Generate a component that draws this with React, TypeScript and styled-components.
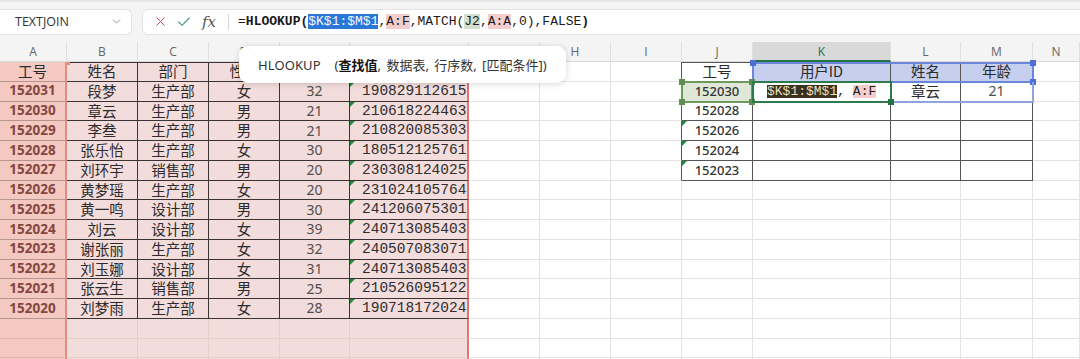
import React from 'react';
import styled, { createGlobalStyle, css } from 'styled-components';
import { X, Check, ChevronDown } from 'lucide-react';

type Kind = 'cjk' | 'id' | 'num' | 'mono' | 'rid' | 'edit';

const COLS = [67, 71, 71, 71, 70, 119, 71, 71, 71, 71, 138, 70, 72, 47];
const LETTERS = ['A', 'B', 'C', 'D', 'E', 'F', 'G', 'H', 'I', 'J', 'K', 'L', 'M', 'N'];
const ROWS = 16;

const leftRows = [
  ['工号', '姓名', '部门', '性别', '年龄', '用户ID'],
  ['152031', '段梦', '生产部', '女', '32', '190829112615'],
  ['152030', '章云', '生产部', '男', '21', '210618224463'],
  ['152029', '李叁', '生产部', '男', '21', '210820085303'],
  ['152028', '张乐怡', '生产部', '女', '30', '180512125761'],
  ['152027', '刘环宇', '销售部', '男', '20', '230308124025'],
  ['152026', '黄梦瑶', '生产部', '女', '20', '231024105764'],
  ['152025', '黄一鸣', '设计部', '男', '30', '241206075301'],
  ['152024', '刘云', '设计部', '女', '39', '240713085403'],
  ['152023', '谢张丽', '生产部', '女', '32', '240507083071'],
  ['152022', '刘玉娜', '设计部', '女', '31', '240713085403'],
  ['152021', '张云生', '销售部', '男', '25', '210526095122'],
  ['152020', '刘梦雨', '生产部', '女', '28', '190718172024'],
];

const rightRows = [
  ['工号', '用户ID', '姓名', '年龄'],
  ['152030', '', '章云', '21'],
  ['152028', '', '', ''],
  ['152026', '', '', ''],
  ['152024', '', '', ''],
  ['152023', '', '', ''],
];

const DARK = '#3b3333';
const RDARK = '#555555';
const GRID = '#e3e3e3';
const PINK = '#f3dcdc';
const SALMON = '#f4c9c1';
const PINK_GRID = '#e8cccc';

const inLeft = (r: number, c: number) => r < leftRows.length && c <= 5;
const inRight = (r: number, c: number) => r < rightRows.length && c >= 9 && c <= 12;

const cellText = (r: number, c: number) => {
  if (inLeft(r, c)) return leftRows[r][c];
  if (inRight(r, c)) return rightRows[r][c - 9];
  return '';
};

const cellKind = (r: number, c: number): Kind => {
  if (r === 1 && c === 10) return 'edit';
  if (r === 0) return 'cjk';
  if (c === 0 && inLeft(r, c)) return 'id';
  if (c === 4 && inLeft(r, c)) return 'num';
  if (c === 5 && inLeft(r, c)) return 'mono';
  if (c === 9 && inRight(r, c)) return 'rid';
  if (c === 12) return 'num';
  return 'cjk';
};

const cellBg = (r: number, c: number) => {
  if (c === 0) return SALMON;
  if (c <= 5) return PINK;
  if (r === 0 && c >= 10 && c <= 12) return '#c6cfee';
  if (r === 1 && c === 9) return '#dfe7d9';
  return '#ffffff';
};

const cellRight = (r: number, c: number): [string, number] => {
  if (c === 0) return ['#e58c7c', 2];
  if (c === 5) return ['#de7676', 2];
  if (c < 5) return [inLeft(r, c) ? DARK : PINK_GRID, 1];
  if (r < rightRows.length && c >= 8 && c <= 12) return [RDARK, 1];
  return [GRID, 1];
};

const cellBottom = (r: number, c: number) => {
  if (inLeft(r, c)) return c === 0 ? '#b9938d' : DARK;
  if (c <= 5) return c === 0 ? '#e7b3aa' : PINK_GRID;
  if (inRight(r, c)) return RDARK;
  return GRID;
};

const cellTop = (r: number, c: number) => {
  if (r !== 0) return undefined;
  if (c >= 1 && c <= 5) return DARK;
  if (c >= 9 && c <= 12) return RDARK;
  return undefined;
};

const hasFlag = (r: number, c: number) =>
  (c === 5 && r >= 1 && r < leftRows.length) || (c === 9 && r >= 3 && r < rightRows.length);

const App = () => {
  return (
    <Page>
      <GlobalStyle />
      <TopBar>
        <NameBox>
          <span>TEXTJOIN</span>
          <ChevronDown size={13} color="#8a8a8a" strokeWidth={1.6} />
        </NameBox>
        <FormulaBox>
          <X size={15} color="#d2465a" strokeWidth={1.6} />
          <Check size={16} color="#3f9c70" strokeWidth={1.6} />
          <Fx>fx</Fx>
          <Divider />
          <FormulaText>
            =<b>HLOOKUP(</b>
            <SelRef>$K$1:$M$1</SelRef>,<PinkRef>A:F</PinkRef>,MATCH(
            <GreenRef>J2</GreenRef>,<PinkRef>A:A</PinkRef>,0),FALSE<b>)</b>
          </FormulaText>
        </FormulaBox>
      </TopBar>

      <Sheet>
        {LETTERS.map((l, c) => (
          <ColHead key={l} $c={c} $active={c === 10}>
            {l}
          </ColHead>
        ))}

        {Array.from({ length: ROWS }).map((_, r) =>
          COLS.map((_w, c) => {
            const [rc, rw] = cellRight(r, c);
            const kind = cellKind(r, c);
            return (
              <Cell
                key={`${r}-${c}`}
                $r={r}
                $c={c}
                $bg={cellBg(r, c)}
                $right={rc}
                $rightW={rw}
                $bottom={cellBottom(r, c)}
                $top={cellTop(r, c)}
                $kind={kind}
                $flag={hasFlag(r, c)}
              >
                {kind === 'edit' ? (
                  <>
                    <DarkChip>$K$1:$M$1</DarkChip>,&nbsp;<PinkRef>A:F</PinkRef>
                  </>
                ) : (
                  cellText(r, c)
                )}
              </Cell>
            );
          })
        )}

        <BlueRange>
          <Handle $color="#4b6fd4" $pos="tl" />
          <Handle $color="#4b6fd4" $pos="tr" />
          <Handle $color="#4b6fd4" $pos="br" />
        </BlueRange>
        <BlueTail />
        <GreenRange>
          <Handle $color="#5f8d52" $pos="tl" />
          <Handle $color="#5f8d52" $pos="tr" />
          <Handle $color="#5f8d52" $pos="bl" />
          <Handle $color="#5f8d52" $pos="br" />
        </GreenRange>
        <ActiveCell>
          <Handle $color="#217346" $pos="br" />
        </ActiveCell>
        <ColAMark />
      </Sheet>

      <Tooltip>
        <TipName>HLOOKUP</TipName>
        <TipArgs>
          (<strong>查找值</strong>, 数据表, 行序数, [匹配条件])
        </TipArgs>
      </Tooltip>
    </Page>
  );
};

export default App;

const GlobalStyle = createGlobalStyle`
  html, body {
    margin: 0;
    padding: 0;
    background: #ffffff;
    overflow: hidden;
  }
  body {
    font-family: 'Noto Sans', 'Noto Sans CJK SC', sans-serif;
  }
`;

const Page = styled.div`
  position: relative;
  width: 1080px;
  height: 359px;
  overflow: hidden;
  background: #ffffff;
`;

const TopBar = styled.div`
  display: flex;
  align-items: center;
  gap: 10px;
  height: 42px;
  box-sizing: border-box;
  padding-bottom: 1px;
  background: #f4f4f4;
  border-top: 2px solid #e6e6e6;
`;

const NameBox = styled.div`
  display: flex;
  align-items: center;
  justify-content: space-between;
  width: 132px;
  height: 26px;
  box-sizing: border-box;
  padding: 0 8px 0 15px;
  background: #ffffff;
  border: 1px solid #e2e2e2;
  border-left: none;
  border-radius: 0 6px 6px 0;
  font-family: 'Open Sans', 'Noto Sans', sans-serif;
  font-size: 12.5px;
  font-weight: 500;
  color: #333333;
`;

const FormulaBox = styled.div`
  display: flex;
  align-items: center;
  gap: 8px;
  flex: 1;
  height: 26px;
  margin-right: -12px;
  box-sizing: border-box;
  padding-left: 10px;
  background: #ffffff;
  border: 1px solid #e2e2e2;
  border-radius: 6px;
`;

const Fx = styled.span`
  font-family: 'DejaVu Serif', 'Liberation Serif', serif;
  font-style: italic;
  font-size: 15px;
  color: #555555;
  margin-left: 2px;
`;

const Divider = styled.span`
  width: 1px;
  height: 16px;
  background: #d4d4d4;
  margin: 0 1px 0 4px;
`;

const FormulaText = styled.div`
  font-family: 'Liberation Mono', 'DejaVu Sans Mono', monospace;
  font-size: 13px;
  color: #1a1a1a;
  white-space: pre;
  b {
    font-weight: 700;
  }
`;

const SelRef = styled.span`
  background: #2a78d6;
  color: #f3f6ff;
`;

const PinkRef = styled.span`
  background: #f6cdcd;
`;

const GreenRef = styled.span`
  background: #d4dfcd;
`;

const DarkChip = styled.span`
  background: #3a3120;
  color: #eadfba;
`;

const Sheet = styled.div`
  position: relative;
  display: grid;
  grid-template-columns: ${COLS.map((w) => `${w}px`).join(' ')};
  grid-template-rows: 20px repeat(${ROWS}, 19.75px);
`;

const ColHead = styled.div<{ $c: number; $active: boolean }>`
  grid-row: 1;
  grid-column: ${(p) => p.$c + 1};
  display: flex;
  align-items: center;
  justify-content: center;
  box-sizing: border-box;
  background: ${(p) => (p.$active ? '#d9d9d9' : '#f4f4f4')};
  border-right: 1px solid #e0e0e0;
  border-bottom: ${(p) => (p.$active ? '2px solid #217346' : '1px solid #dadada')};
  font-family: 'Open Sans', 'Noto Sans', sans-serif;
  font-size: 12px;
  color: ${(p) => (p.$active ? '#217346' : '#666666')};
`;

const kindStyles: Record<Kind, ReturnType<typeof css>> = {
  cjk: css`
    font-size: 14.5px;
    color: #2b2b2b;
  `,
  id: css`
    font-family: 'Noto Sans', 'Noto Sans CJK SC', sans-serif;
    font-size: 13.5px;
    font-weight: 700;
    color: #84463f;
  `,
  num: css`
    font-family: 'Noto Sans', sans-serif;
    font-size: 14px;
    color: #4f4f4f;
  `,
  mono: css`
    justify-content: flex-start;
    padding-left: 12px;
    font-family: 'Liberation Mono', 'DejaVu Sans Mono', monospace;
    font-size: 14.5px;
    color: #2e2e2e;
  `,
  rid: css`
    font-family: 'Noto Sans', sans-serif;
    font-size: 13px;
    font-weight: 500;
    color: #333333;
  `,
  edit: css`
    justify-content: flex-start;
    padding-left: 14px;
    font-family: 'Liberation Mono', 'DejaVu Sans Mono', monospace;
    font-size: 13px;
    color: #222222;
  `,
};

const Cell = styled.div<{
  $r: number;
  $c: number;
  $bg: string;
  $right: string;
  $rightW: number;
  $bottom: string;
  $top?: string;
  $kind: Kind;
  $flag?: boolean;
}>`
  position: relative;
  grid-row: ${(p) => p.$r + 2};
  grid-column: ${(p) => p.$c + 1};
  display: flex;
  align-items: center;
  justify-content: center;
  box-sizing: border-box;
  white-space: nowrap;
  line-height: 1;
  font-family: 'Noto Sans CJK SC', 'Noto Sans', sans-serif;
  background: ${(p) => p.$bg};
  border-right: ${(p) => p.$rightW}px solid ${(p) => p.$right};
  border-bottom: 1px solid ${(p) => p.$bottom};
  box-shadow: ${(p) => (p.$top ? `inset 0 1px 0 ${p.$top}` : 'none')};
  ${(p) => kindStyles[p.$kind]}
  ${(p) =>
    p.$flag &&
    css`
      &::before {
        content: '';
        position: absolute;
        left: 0;
        top: 0;
        border-top: 5px solid #1f8a3b;
        border-right: 5px solid transparent;
      }
    `}
`;

const Overlay = styled.div`
  position: relative;
  z-index: 2;
  box-sizing: border-box;
  pointer-events: none;
`;

const BlueRange = styled(Overlay)`
  grid-row: 2;
  grid-column: 11 / 14;
  margin: 0 -1px -1px -1px;
  border: 2px solid #6a86d8;
`;

const BlueTail = styled(Overlay)`
  grid-row: 3;
  grid-column: 12 / 14;
  margin: 0 -1px -1px 0;
  border-right: 2px solid #8fa3e0;
  border-bottom: 2px solid #8fa3e0;
`;

const GreenRange = styled(Overlay)`
  grid-row: 3;
  grid-column: 10;
  margin: -1px 0 -1px -1px;
  border: 2px solid #6c9a5e;
`;

const ActiveCell = styled(Overlay)`
  grid-row: 3;
  grid-column: 11;
  margin: -1px -1px -1px -1px;
  border: 2px solid #2c7a4d;
`;

const Handle = styled.span<{ $color: string; $pos: 'tl' | 'tr' | 'bl' | 'br' }>`
  position: absolute;
  width: 6px;
  height: 6px;
  background: ${(p) => p.$color};
  ${(p) => (p.$pos[0] === 't' ? 'top: -4px;' : 'bottom: -4px;')}
  ${(p) => (p.$pos[1] === 'l' ? 'left: -4px;' : 'right: -4px;')}
`;

const ColAMark = styled(Overlay)`
  grid-row: 2;
  grid-column: 1;
  justify-self: end;
  width: 5px;
  height: 3px;
  margin-right: -3px;
  background: #e58c7c;
`;

const Tooltip = styled.div`
  position: absolute;
  left: 239px;
  top: 46px;
  z-index: 5;
  display: flex;
  align-items: center;
  gap: 14px;
  height: 37px;
  box-sizing: border-box;
  padding: 0 19px 0 19px;
  background: #ffffff;
  border-radius: 9px;
  box-shadow: 0 1px 6px rgba(0, 0, 0, 0.16);
  font-family: 'Noto Sans', 'Noto Sans CJK SC', sans-serif;
  font-size: 13px;
  color: #333333;
  white-space: nowrap;
`;

const TipName = styled.span`
  letter-spacing: 0.1px;
`;

const TipArgs = styled.span`
  word-spacing: 2px;
  strong {
    font-weight: 700;
    color: #111111;
  }
`;
